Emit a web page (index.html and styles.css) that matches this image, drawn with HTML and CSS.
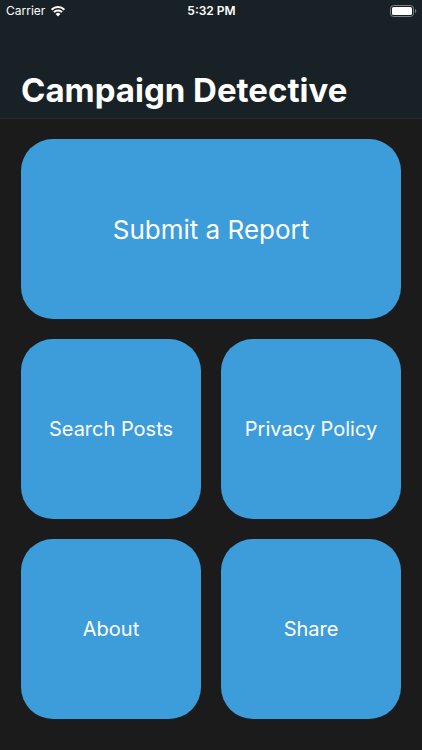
FILE: index.html
```html
<!DOCTYPE html>
<html lang="en">
<head>
<meta charset="utf-8">
<meta name="viewport" content="width=device-width, initial-scale=1">
<title>Campaign Detective</title>
<link rel="stylesheet" href="styles.css">
</head>
<body>
<header class="header">
  <div class="status">
    <div class="carrier">
      <span>Carrier</span>
      <svg class="wifi" viewBox="0 0 16 12" width="16" height="12" aria-hidden="true">
        <path d="M1.600 4.700a9.200 9.200 0 0 1 12.800 0M3.900 7.100a5.900 5.900 0 0 1 8.200 0" fill="none" stroke="#fff" stroke-width="2"/>
        <path d="M8 11.400 5.600 9a3.400 3.400 0 0 1 4.800 0z" fill="#fff"/>
      </svg>
    </div>
    <time class="time">5:32 PM</time>
    <svg class="battery" viewBox="0 0 27 12" width="27" height="12" aria-hidden="true">
      <rect x=".5" y=".5" width="23" height="11" rx="3" fill="none" stroke="#7b8083"/>
      <rect x="2" y="2" width="20" height="8" rx="1.600" fill="#fff"/>
      <path d="M25 4v4c1.800-.7 1.800-3.300 0-4z" fill="#7b8083"/>
    </svg>
  </div>
  <h1 class="title">Campaign Detective</h1>
</header>
<main class="menu">
  <button class="tile tile-wide" type="button">Submit a Report</button>
  <button class="tile" type="button">Search Posts</button>
  <button class="tile" type="button">Privacy Policy</button>
  <button class="tile" type="button">About</button>
  <button class="tile" type="button">Share</button>
</main>
</body>
</html>
```
FILE: styles.css
```css
* { box-sizing: border-box; }
body {
  margin: 0;
  min-height: 100vh;
  background: #1b1b1b;
  color: #fff;
  font-family: Inter, "Liberation Sans", sans-serif;
}
.header {
  background: #182126;
  border-bottom: 1px solid #242b2f;
}
.status {
  display: grid;
  grid-template-columns: 1fr auto 1fr;
  align-items: center;
  height: 21px;
  padding: 0 5px 0 6px;
  font-size: 12px;
}
.carrier { display: flex; align-items: center; gap: 5px; }
.time { font-weight: 600; }
.battery { justify-self: end; }
.title {
  margin: 0;
  padding: 47px 21px 6px;
  font-size: 33px;
  line-height: 44px;
  font-weight: 700;
  white-space: nowrap;
}
.menu {
  display: grid;
  grid-template-columns: 1fr 1fr;
  gap: 20px;
  padding: 20px 21px 30px;
}
.tile {
  aspect-ratio: 1;
  border: 0;
  border-radius: 32px;
  padding: 0;
  background: #3d9dda;
  color: #fff;
  font: inherit;
  font-size: 20px;
}
.tile-wide {
  grid-column: span 2;
  aspect-ratio: 19 / 9;
  font-size: 26px;
}
```
